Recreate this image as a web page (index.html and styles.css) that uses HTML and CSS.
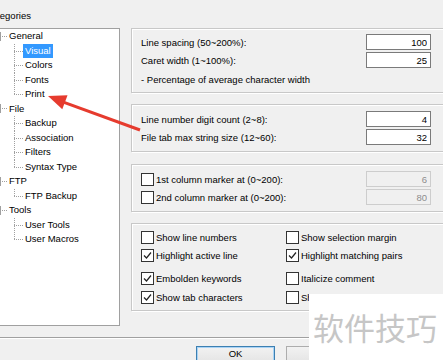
FILE: index.html
```html
<!DOCTYPE html>
<html lang="en">
<head>
  <meta charset="UTF-8">
  <title>Options - Visual</title>
  <link rel="stylesheet" href="styles.css">
</head>
<body>
  <div class="dialog">
    <div class="cat-label">Categories</div>
    <div></div>

    <div class="tree">
      <div class="node"><span class="exp"></span><span class="dots"></span><span class="txt">General</span></div>
      <div class="leaf"><span class="txt sel">Visual</span></div>
      <div class="leaf"><span class="txt">Colors</span></div>
      <div class="leaf"><span class="txt">Fonts</span></div>
      <div class="leaf last"><span class="txt">Print</span></div>
      <div class="node"><span class="exp"></span><span class="dots"></span><span class="txt">File</span></div>
      <div class="leaf"><span class="txt">Backup</span></div>
      <div class="leaf"><span class="txt">Association</span></div>
      <div class="leaf"><span class="txt">Filters</span></div>
      <div class="leaf last"><span class="txt">Syntax Type</span></div>
      <div class="node"><span class="exp"></span><span class="dots"></span><span class="txt">FTP</span></div>
      <div class="leaf last"><span class="txt">FTP Backup</span></div>
      <div class="node"><span class="exp"></span><span class="dots"></span><span class="txt">Tools</span></div>
      <div class="leaf"><span class="txt">User Tools</span></div>
      <div class="leaf last"><span class="txt">User Macros</span></div>
    </div>

    <div class="panels">
      <div class="group g1">
        <div class="field"><span>Line spacing (50~200%):</span><input class="num" value="100"></div>
        <div class="field"><span>Caret width (1~100%):</span><input class="num" value="25"></div>
        <div class="note">- Percentage of average character width</div>
      </div>

      <div class="group g2">
        <div class="field"><span>Line number digit count (2~8):</span><input class="num" value="4"></div>
        <div class="field"><span>File tab max string size (12~60):</span><input class="num" value="32"></div>
      </div>

      <div class="group g3">
        <div class="field">
          <span class="check"><span class="box"></span>1st column marker at (0~200):</span>
          <input class="num" value="6" disabled>
        </div>
        <div class="field">
          <span class="check"><span class="box"></span>2nd column marker at (0~200):</span>
          <input class="num" value="80" disabled>
        </div>
      </div>

      <div class="group g4">
        <span class="check"><span class="box"></span>Show line numbers</span>
        <span class="check"><span class="box"></span>Show selection margin</span>
        <span class="check"><span class="box on"><svg width="9" height="9" viewBox="0 0 9 9"><polyline points="1,4.5 3.5,7 8,1.5"/></svg></span>Highlight active line</span>
        <span class="check"><span class="box on"><svg width="9" height="9" viewBox="0 0 9 9"><polyline points="1,4.5 3.5,7 8,1.5"/></svg></span>Highlight matching pairs</span>
        <span class="check"><span class="box on"><svg width="9" height="9" viewBox="0 0 9 9"><polyline points="1,4.5 3.5,7 8,1.5"/></svg></span>Embolden keywords</span>
        <span class="check"><span class="box"></span>Italicize comment</span>
        <span class="check"><span class="box on"><svg width="9" height="9" viewBox="0 0 9 9"><polyline points="1,4.5 3.5,7 8,1.5"/></svg></span>Show tab characters</span>
        <span class="check"><span class="box"></span>Show line breaks</span>
      </div>
    </div>
  </div>

  <div class="footer">
    <button class="btn default">OK</button>
    <button class="btn">Cancel</button>
  </div>

  <!-- annotation arrow drawn over the dialog -->
  <svg class="arrow" width="443" height="360" viewBox="0 0 443 360">
    <line x1="62" y1="101.6" x2="140" y2="130" />
    <polygon points="48,96 62.3,109.2 67.5,95.2" />
  </svg>

  <div class="watermark">软件技巧</div>
</body>
</html>
```

FILE: styles.css
```css
body {
  margin: 0;
  width: 443px;
  height: 360px;
  overflow: hidden;
  background: #f0f0f0;
  font-family: "Liberation Sans", Arial, sans-serif;
  font-size: 9.5px;
  color: #000;
  position: relative;
}
.dialog {
  display: grid;
  grid-template-columns: 135px 316px;
  column-gap: 11px;
  row-gap: 5px;
  padding-top: 9px;
  margin-left: -15px;
}
.cat-label {
  line-height: 14px;
}

/* tree */
.tree {
  margin-left: 3px;
  height: 298px;
  box-sizing: border-box;
  background: #fff;
  border: 1px solid #a0a0a0;
}
.node, .leaf {
  display: flex;
  align-items: center;
  height: 14.5px;
  line-height: 14px;
  white-space: nowrap;
}
.exp {
  width: 9px;
  height: 9px;
  box-sizing: border-box;
  margin-left: 3px;
  border: 1px solid #a0a0a0;
  background: linear-gradient(#333, #333) center / 5px 1px no-repeat, #fff;
}
.dots {
  width: 5px;
  margin-left: 1px;
  border-top: 1px dotted #a0a0a0;
}
.txt {
  padding: 0 2px;
}
.leaf {
  padding-left: 34px;
  background-image:
    repeating-linear-gradient(to bottom, #a0a0a0 0 1px, transparent 1px 2px),
    repeating-linear-gradient(to right, #a0a0a0 0 1px, transparent 1px 2px);
  background-size: 1px 100%, 9px 1px;
  background-position: 25px 0, 25px 7px;
  background-repeat: no-repeat;
}
.leaf.last {
  background-size: 1px 8px, 9px 1px;
}
.sel {
  background: #3399ff;
  color: #fff;
}

/* option groups */
.panels {
  display: flex;
  flex-direction: column;
  gap: 11px;
}
.group {
  border: 1px solid #c8c8c8;
  box-shadow: inset 1px 1px 0 #fff, 1px 1px 0 #fff;
  padding: 5px 15px 5px 9px;
}
.g1 {
  display: flex;
  flex-direction: column;
  gap: 2px;
}
.g2, .g3 {
  display: flex;
  flex-direction: column;
  gap: 2px;
  padding-top: 6px;
  padding-bottom: 6px;
}
.g3 {
  margin-top: 1px;
}
.field {
  display: flex;
  justify-content: space-between;
  align-items: center;
  height: 16px;
}
.note {
  margin-top: 3px;
  line-height: 14px;
}
.num {
  width: 65px;
  height: 16px;
  box-sizing: border-box;
  border: 1px solid #7a7a7a;
  background: #fff;
  font: inherit;
  text-align: right;
  padding: 0 3px;
  margin: 0;
  color: #000;
}
.num:disabled {
  border-color: #cdcdcd;
  background: #f0f0f0;
  color: #8d8d8d;
}
.g4 {
  display: grid;
  grid-template-columns: 145px 1fr;
  grid-template-rows: 18px 18px 23px 19px;
  align-items: end;
  padding: 4px 15px 4px 9px;
}
.check {
  display: flex;
  align-items: center;
  gap: 2px;
  height: 18px;
  white-space: nowrap;
}
.field .check {
  height: 16px;
}
.box {
  width: 13px;
  height: 13px;
  box-sizing: border-box;
  border: 1px solid #333;
  background: #fff;
  display: flex;
  align-items: center;
  justify-content: center;
  flex: none;
}
.box svg polyline {
  fill: none;
  stroke: #222;
  stroke-width: 1.2;
}

/* buttons */
.footer {
  margin-top: 11px;
  border-top: 1px solid #a0a0a0;
  box-shadow: inset 0 1px 0 #fff;
  padding: 8px 0 0 196px;
  display: flex;
  gap: 11px;
}
.btn {
  width: 79px;
  height: 22px;
  box-sizing: border-box;
  border: 1px solid #adadad;
  background: linear-gradient(#f2f2f2, #e0e0e0);
  font: inherit;
  line-height: 14px;
  padding: 0;
  display: flex;
  justify-content: center;
  align-items: flex-start;
}
.btn.default {
  border-color: #3c7fb1;
  box-shadow: inset 0 0 0 1px #a9d3f5;
}

.arrow {
  position: absolute;
  left: 0;
  top: 0;
  pointer-events: none;
}
.arrow line {
  stroke: #e63b2e;
  stroke-width: 3;
}
.arrow polygon {
  fill: #e63b2e;
}

.watermark {
  position: absolute;
  left: 309px;
  top: 294px;
  width: 134px;
  height: 66px;
  box-sizing: border-box;
  background: #fff;
  padding-left: 4px;
  font-family: "Noto Sans CJK SC", sans-serif;
  font-size: 31px;
  line-height: 66px;
  color: #c6c6c6;
  white-space: nowrap;
}
```
